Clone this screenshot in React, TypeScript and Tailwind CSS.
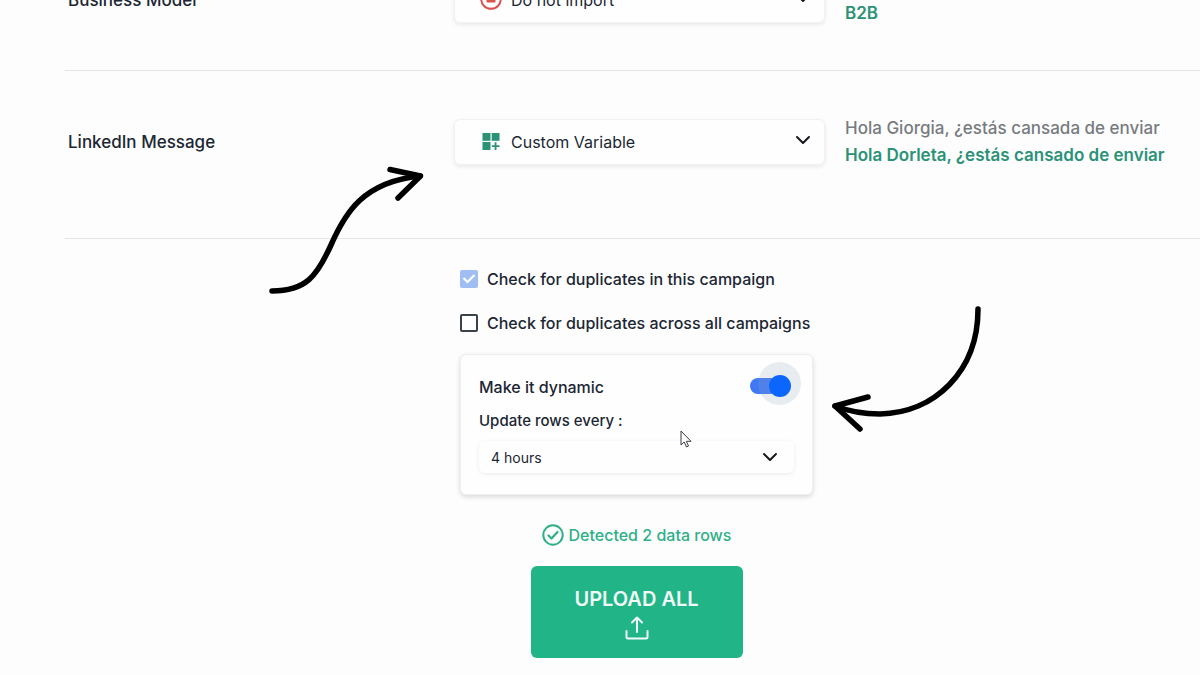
import React, { useState } from 'react';

const ChevronIcon = ({ className = '' }: { className?: string }) => (
  <svg viewBox="0 0 16 10" fill="none" className={`pointer-events-none absolute h-[10px] w-4 ${className}`}>
    <path d="M2 2l6 6 6-6" stroke="#16191d" strokeWidth="2" strokeLinecap="round" strokeLinejoin="round" />
  </svg>
);

const StopIcon = () => (
  <svg viewBox="0 0 22 22" fill="none" className="h-[22px] w-[22px]">
    <circle cx="11" cy="10" r="9.8" stroke="#d9534f" strokeWidth="2" />
    <rect x="6.5" y="5" width="9" height="8.5" rx="1" fill="#d9534f" />
  </svg>
);

const CustomVariableIcon = () => (
  <svg viewBox="0 0 18 18" fill="#2b9277" className="h-[18px] w-[18px]">
    <rect x="0.5" y="0" width="8" height="7.8" />
    <rect x="9.7" y="0" width="7.8" height="7.8" />
    <rect x="0.5" y="9" width="8" height="8" />
    <path d="M12.6 9.3h1.9v2.9h3v1.9h-3V17h-1.9v-2.9H9.8v-1.9h2.8z" />
  </svg>
);

const UploadIcon = () => (
  <svg viewBox="0 0 24 24" fill="none" stroke="#f0faf6" strokeWidth="2" strokeLinecap="round" strokeLinejoin="round" className="h-6 w-6">
    <path d="M1.5 15v6a1.5 1.5 0 0 0 1.5 1.5h18a1.5 1.5 0 0 0 1.5-1.5v-6" />
    <path d="M12 16V2M7 6.5l5-5 5 5" />
  </svg>
);

const CheckCircleIcon = () => (
  <svg viewBox="0 0 22 22" fill="none" stroke="#2fb088" strokeWidth="2" strokeLinecap="round" strokeLinejoin="round" className="h-[22px] w-[22px]">
    <circle cx="11" cy="11" r="9.7" />
    <path d="M6.5 11.5l3 3 6-6.5" strokeWidth="2.3" />
  </svg>
);

type FieldRowProps = {
  id: string;
  label: string;
  value: string;
  icon: React.ReactNode;
  preview: string[];
  className?: string;
};

const FieldRow = ({ id, label, value, icon, preview, className = '' }: FieldRowProps) => (
  <div className={`grid grid-cols-[389fr_371fr_375fr] items-center border-b border-[#e4e5e6] ${className}`}>
    <label htmlFor={id} className="pl-[3px] text-[17px] leading-6 font-medium">
      {label}
    </label>
    <div className="relative">
      <span className="pointer-events-none absolute inset-y-0 left-[26px] flex w-[22px] items-center justify-center">{icon}</span>
      <select
        id={id}
        defaultValue={value}
        className="h-[46px] w-full appearance-none rounded-md border border-[#f1f2f2] bg-[#fefefe] pl-14 pr-10 pb-px text-[16px] shadow-[0_2px_4px_rgba(0,0,0,0.08)]"
      >
        <option>Do not import</option>
        <option>Custom Variable</option>
      </select>
      <ChevronIcon className="right-[14px] top-4" />
    </div>
    <div className="whitespace-nowrap pl-5 text-[17px] leading-[27px]">
      <p className="font-medium text-[#777b80]">{preview[0]}</p>
      <p className="font-semibold text-[#2b9277]">{preview[1]}</p>
    </div>
  </div>
);

const DuplicateCheck = ({ label, ...input }: { label: string } & React.InputHTMLAttributes<HTMLInputElement>) => (
  <label className="flex h-6 items-center gap-[9px] whitespace-nowrap text-[16px] font-medium">
    <span className="relative flex">
      <input
        type="checkbox"
        className="peer h-[18px] w-[18px] appearance-none rounded-[2px] border-2 border-[#3c424b] bg-white checked:border-[#a0bdf4] checked:bg-[#a0bdf4]"
        {...input}
      />
      <svg viewBox="0 0 18 18" fill="none" className="pointer-events-none absolute inset-0 hidden peer-checked:block">
        <path d="M3.5 8l4 4 7-7" stroke="white" strokeWidth="2.2" />
      </svg>
    </span>
    {label}
  </label>
);

const DynamicCard = () => {
  const [dynamic, setDynamic] = useState(true);

  return (
    <div className="relative rounded-md border border-[#eeefef] bg-[#fefefe] px-[18px] pb-[21px] pt-5 shadow-[0_2px_5px_rgba(0,0,0,0.15)]">
      <div className="flex items-start justify-between">
        <label htmlFor="dynamic" className="text-[16px] leading-6 font-medium">
          Make it dynamic
        </label>
        <span className="relative mr-[3px] mt-[3px] flex h-4 w-[41px]">
          <input
            id="dynamic"
            type="checkbox"
            role="switch"
            checked={dynamic}
            onChange={(e) => setDynamic(e.target.checked)}
            className="h-4 w-9 appearance-none rounded-full bg-gray-300 checked:bg-[#4079f5]"
          />
          <span className="pointer-events-none absolute -right-[10px] -top-4 h-[43px] w-[43px] rounded-full bg-[#8da6b8]/20" />
          <span className="pointer-events-none absolute -top-[3px] right-0 h-[22px] w-[22px] rounded-full bg-[#0a66fd]" />
        </span>
      </div>
      <label htmlFor="interval" className="mt-3 block text-[15px] leading-5 font-medium">
        Update rows every :
      </label>
      <div className="relative mt-[10px]">
        <select
          id="interval"
          defaultValue="4 hours"
          className="h-8 w-full appearance-none rounded-md bg-[#fefefe] pl-3 pr-10 text-[14px] shadow-[0_1px_4px_rgba(0,0,0,0.08)]"
        >
          <option>4 hours</option>
          <option>8 hours</option>
          <option>24 hours</option>
        </select>
        <ChevronIcon className="right-4 top-[11px]" />
      </div>
      {/* mouse pointer */}
      <svg viewBox="0 0 12 18" className="pointer-events-none absolute left-[219px] top-[75px] h-[18px] w-3">
        <path d="M1 1v14l3.2-3 2.3 5 2-1-2.2-4.700H11z" fill="white" stroke="#3a3d42" strokeWidth="1" />
      </svg>
    </div>
  );
};

const App = () => {
  return (
    <main className="relative min-h-screen overflow-hidden bg-[#fdfdfd] font-['Inter',sans-serif] text-[#1c2633]">
      <section className="-mt-[27px] pl-[65px]">
        <FieldRow id="business-model" label="Business Model" value="Do not import" icon={<StopIcon />} preview={['B2B', 'B2B']} className="pb-[43px]" />
        <FieldRow
          id="linkedin-message"
          label="LinkedIn Message"
          value="Custom Variable"
          icon={<CustomVariableIcon />}
          preview={['Hola Giorgia, ¿estás cansada de enviar', 'Hola Dorleta, ¿estás cansado de enviar']}
          className="pb-[69px] pt-11"
        />
      </section>

      <section className="flex flex-col items-center pl-[73px] pt-7">
        <div className="flex w-[353px] flex-col">
          <DuplicateCheck label="Check for duplicates in this campaign" defaultChecked disabled />
          <div className="mb-[19px] mt-5">
            <DuplicateCheck label="Check for duplicates across all campaigns" />
          </div>
          <DynamicCard />
        </div>
        <p className="mt-7 flex h-6 items-center gap-[5px] text-[16px] font-medium text-[#2fb088]">
          <CheckCircleIcon />
          Detected 2 data rows
        </p>
        <button type="button" className="mb-4 mt-[19px] flex h-[92px] w-[212px] flex-col items-center justify-center gap-[5px] rounded-md bg-[#20b486] pt-[2px] text-[20px] leading-6 font-semibold text-[#f0faf6]">
          UPLOAD ALL
          <UploadIcon />
        </button>
      </section>

      {/* hand-drawn arrows */}
      <svg viewBox="0 0 160 132" fill="none" stroke="black" strokeWidth="5.5" strokeLinecap="round" strokeLinejoin="round" className="pointer-events-none absolute left-[267px] top-[164px] h-[132px] w-40">
        <path d="M5 127C39 127 50 112 64 81C78 49 96 18 153 12" />
        <path d="M123 5.5L153.5 12L131 34" />
      </svg>
      <svg viewBox="0 0 156 132" fill="none" stroke="black" strokeWidth="5.5" strokeLinecap="round" strokeLinejoin="round" className="pointer-events-none absolute left-[829px] top-[303px] h-[132px] w-[156px]">
        <path d="M149 6C149 69 105 110 51 111C33 111 19 108 6 103" />
        <path d="M39 94L6 103L31 126" />
      </svg>
    </main>
  );
};

export default App;
